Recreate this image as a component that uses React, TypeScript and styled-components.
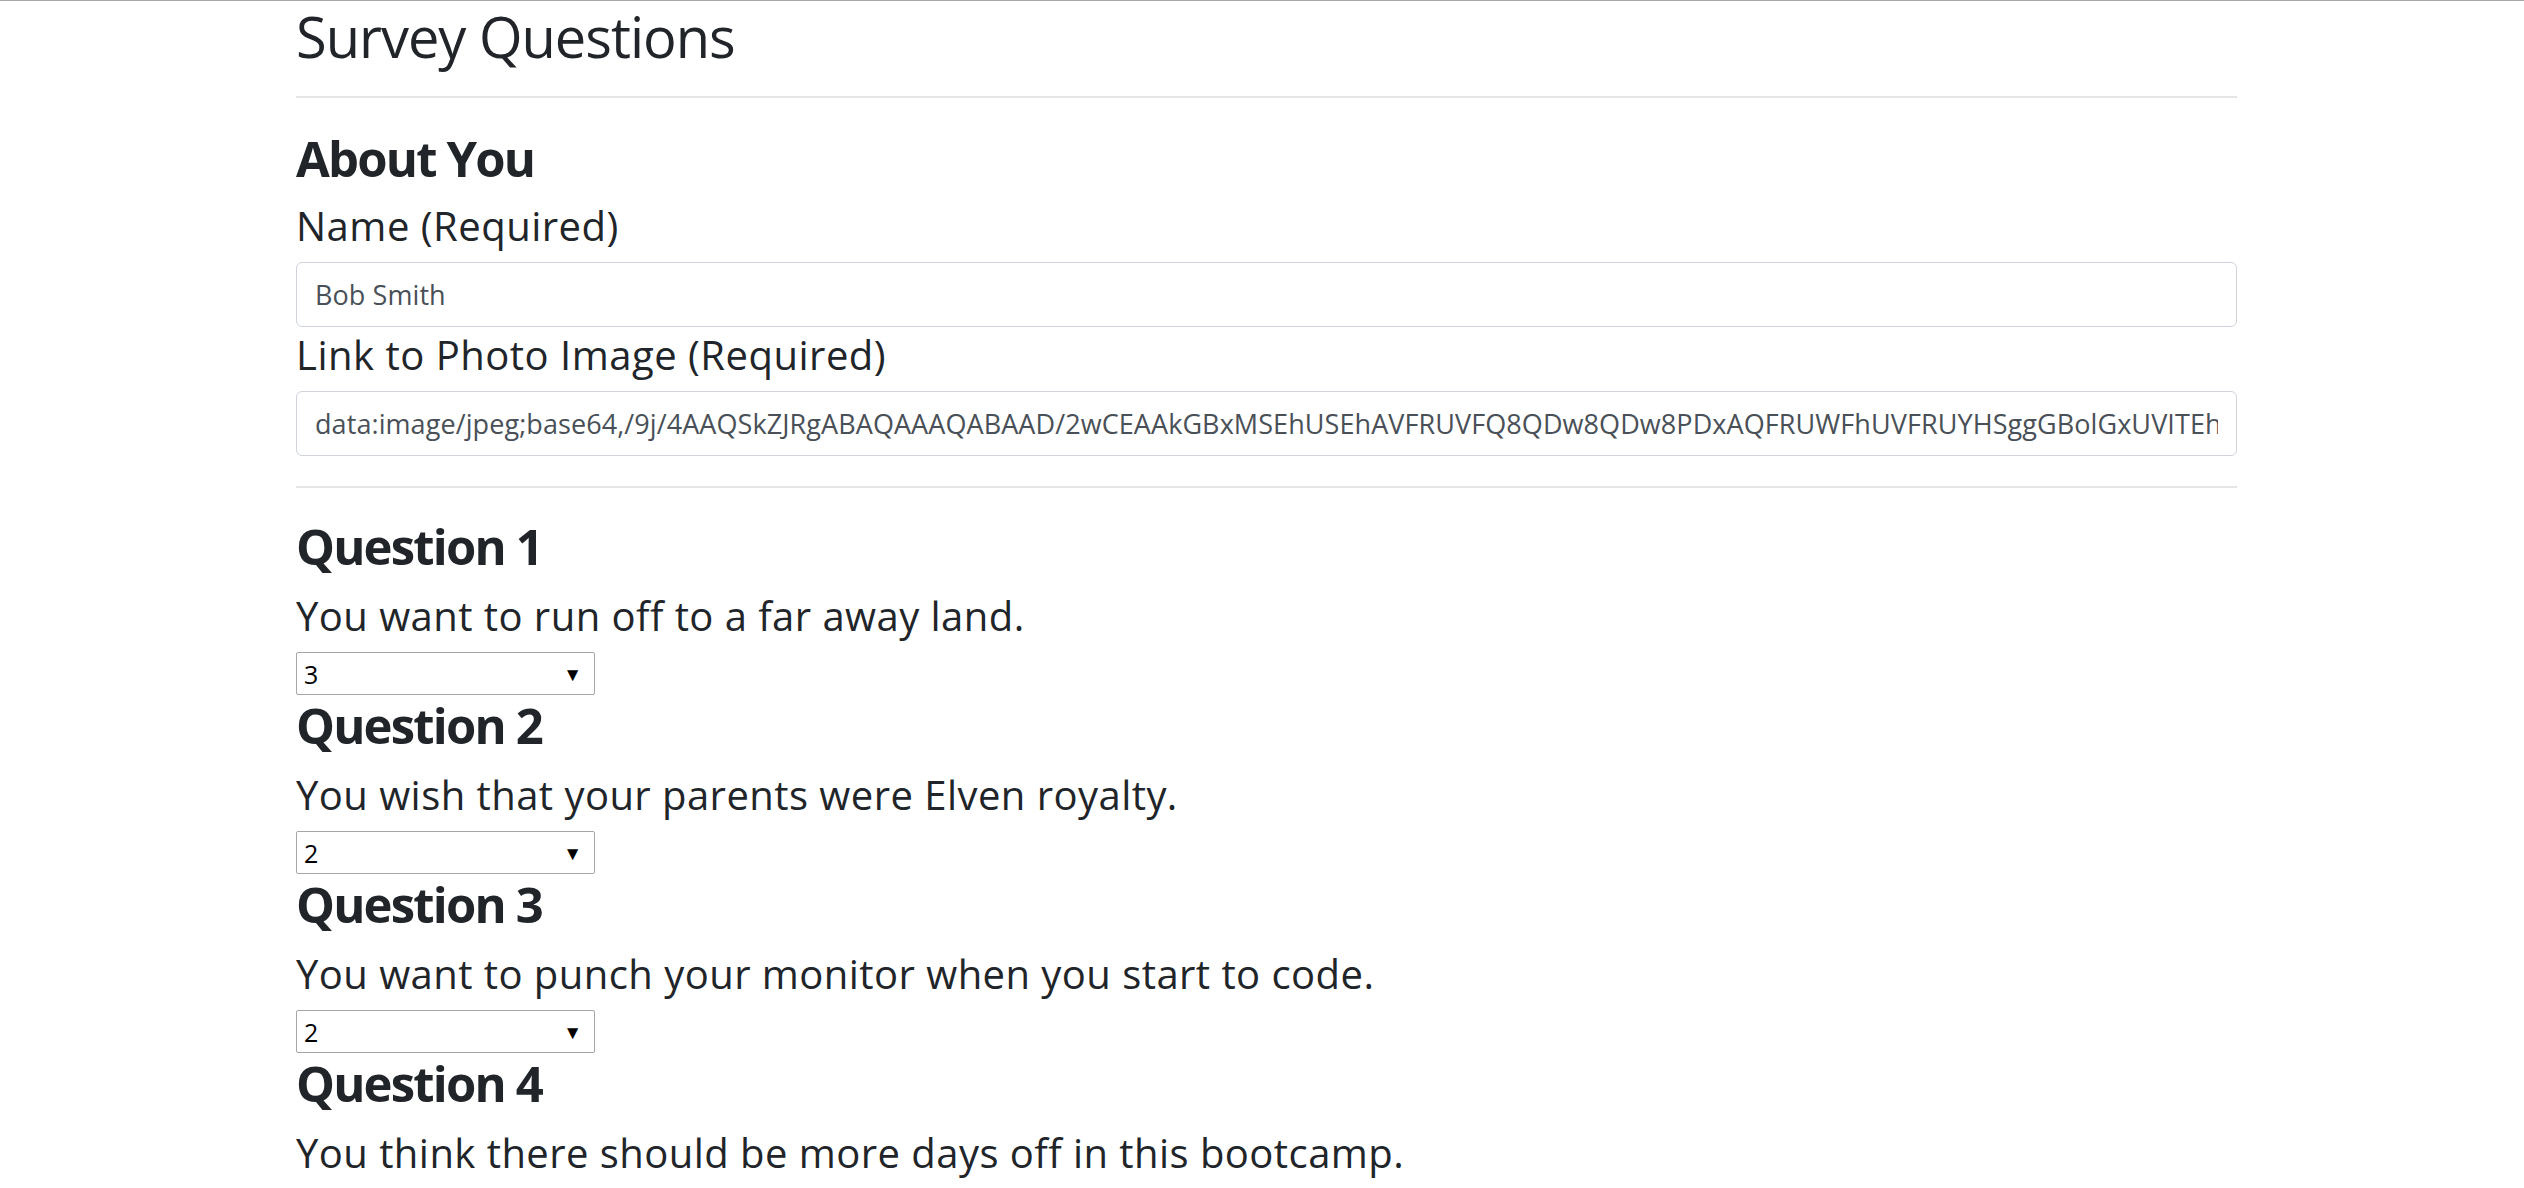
import React from "react";
import styled, { createGlobalStyle } from "styled-components";

const questions = [
  { text: "You want to run off to a far away land.", answer: "3" },
  { text: "You wish that your parents were Elven royalty.", answer: "2" },
  { text: "You want to punch your monitor when you start to code.", answer: "2" },
  { text: "You think there should be more days off in this bootcamp.", answer: "1" },
];

const photo =
  "data:image/jpeg;base64,/9j/4AAQSkZJRgABAQAAAQABAAD/2wCEAAkGBxMSEhUSEhAVFRUVFQ8QDw8QDw8PDxAQFRUWFhUVFRUYHSggGBolGxUVITEhJSkrLi4uFx8zODMtNygtLisBCgoKDg0OGhAQGi0lHyUtLS0tLS0tLS0t";

const App = () => {
  return (
    <>
      <GlobalStyle />
      <Container>
        <Title>Survey Questions</Title>
        <Divider />

        <SectionTitle>About You</SectionTitle>
        <FieldLabel htmlFor="name">Name (Required)</FieldLabel>
        <TextInput id="name" type="text" defaultValue="Bob Smith" />
        <FieldLabel htmlFor="photo" gap={4}>
          Link to Photo Image (Required)
        </FieldLabel>
        <TextInput id="photo" type="text" defaultValue={photo} />

        <Divider gap={30} />

        <QuestionList>
          {questions.map((q, i) => (
            <Question key={i}>
              <SectionTitle as="h3">Question {i + 1}</SectionTitle>
              <QuestionText>{q.text}</QuestionText>
              <SelectWrap>
                <Select defaultValue={q.answer}>
                  <option value="1">1</option>
                  <option value="2">2</option>
                  <option value="3">3</option>
                  <option value="4">4</option>
                  <option value="5">5</option>
                </Select>
                <Caret>▼</Caret>
              </SelectWrap>
            </Question>
          ))}
        </QuestionList>
      </Container>
    </>
  );
};

export default App;

const GlobalStyle = createGlobalStyle`
  html, body {
    margin: 0;
    padding: 0;
    background: #fff;
  }
  body {
    border-top: 1px solid #a8a8a8;
    font-family: "Open Sans", "Noto Sans", sans-serif;
    color: #212529;
    overflow: hidden;
  }
`;

const Container = styled.main`
  width: 1941px;
  margin-left: 296px;
`;

const Title = styled.h1`
  margin: 1px 0 0;
  font-size: 56px;
  line-height: 68px;
  font-weight: 400;
  letter-spacing: -1px;
`;

const Divider = styled.hr<{ gap?: number }>`
  margin: ${(p) => p.gap ?? 26}px 0 0;
  height: 0;
  border: 0;
  border-top: 2px solid #e5e5e5;
`;

const SectionTitle = styled.h2`
  margin: 30px 0 0;
  font-size: 49px;
  line-height: 60px;
  font-weight: 700;
  letter-spacing: -1.8px;
`;

const FieldLabel = styled.label<{ gap?: number }>`
  display: block;
  margin-top: ${(p) => p.gap ?? 14}px;
  font-size: 40px;
  line-height: 48px;
  letter-spacing: 0.5px;
`;

const TextInput = styled.input`
  display: block;
  box-sizing: border-box;
  width: 100%;
  height: 65px;
  margin-top: 12px;
  padding: 0 18px;
  border: 1px solid #ced4da;
  border-radius: 6px;
  font-family: inherit;
  font-size: 27px;
  letter-spacing: 0.08px;
  color: #495057;
  background: #fff;
  outline: none;
`;

const QuestionList = styled.div`
  margin-top: 28px;
`;

const Question = styled.section`
  & > h3 {
    margin-top: 0;
  }
`;

const QuestionText = styled.p`
  margin: 16px 0 0;
  font-size: 40px;
  line-height: 48px;
  letter-spacing: 0.45px;
`;

const SelectWrap = styled.div`
  position: relative;
  width: 299px;
  height: 43px;
  margin-top: 12px;
`;

const Select = styled.select`
  appearance: none;
  box-sizing: border-box;
  width: 100%;
  height: 100%;
  padding: 0 0 0 7px;
  border: 1px solid #a6a6a6;
  border-radius: 2px;
  background: #fff;
  font-family: inherit;
  font-size: 25px;
  color: #000;
  outline: none;
`;

const Caret = styled.span`
  position: absolute;
  right: 13px;
  top: 50%;
  transform: translateY(-50%);
  font-size: 19px;
  line-height: 1;
  color: #000;
  pointer-events: none;
`;
